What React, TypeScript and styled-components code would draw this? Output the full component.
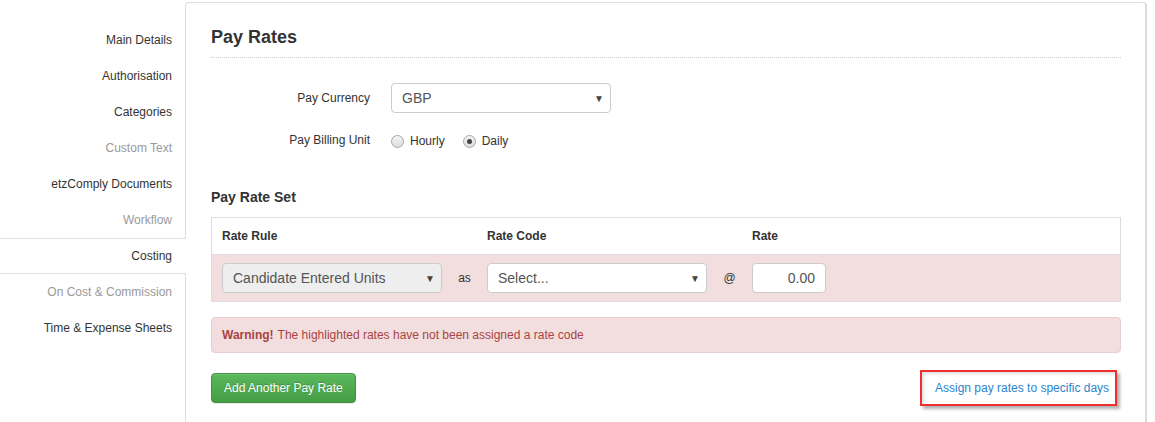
import React, { useState } from "react";
import styled, { createGlobalStyle } from "styled-components";

const GlobalStyle = createGlobalStyle`
  html, body {
    margin: 0;
    padding: 0;
    background: #ffffff;
  }
  body {
    font-family: "Liberation Sans", Arial, sans-serif;
    font-size: 12px;
    color: #333333;
  }
`;

const Page = styled.div`
  display: flex;
  align-items: flex-start;
  width: 1155px;
  height: 422px;
  overflow: hidden;
`;

const Sidebar = styled.nav`
  display: flex;
  flex-direction: column;
  width: 185px;
  flex-shrink: 0;
  padding-top: 22px;
  position: relative;
  z-index: 1;
`;

const NavItem = styled.div<{ $active?: boolean; $disabled?: boolean }>`
  height: 34px;
  display: flex;
  align-items: center;
  justify-content: flex-end;
  font-size: 12px;
  color: ${(p) => (p.$disabled ? "#999999" : "#333333")};
  border-top: 1px solid ${(p) => (p.$active ? "#dddddd" : "transparent")};
  border-bottom: 1px solid ${(p) => (p.$active ? "#dddddd" : "transparent")};
  background: ${(p) => (p.$active ? "#ffffff" : "transparent")};
  margin-right: ${(p) => (p.$active ? "-1px" : "0")};
  padding-right: ${(p) => (p.$active ? "14px" : "13px")};
  cursor: pointer;
`;

const Panel = styled.section`
  margin-top: 2px;
  width: 910px;
  height: 440px;
  border: 1px solid #dddddd;
  border-right: 2px solid #dddddd;
  border-radius: 4px 4px 0 0;
  padding: 0 24px 0 25px;
  display: flex;
  flex-direction: column;
`;

const Title = styled.h2`
  margin: 0;
  padding-top: 24px;
  padding-bottom: 10px;
  font-size: 18px;
  line-height: 20px;
  font-weight: bold;
  color: #333333;
  border-bottom: 1px dotted #cccccc;
`;

const Form = styled.div`
  display: flex;
  flex-direction: column;
  padding-top: 25px;
  gap: 17px;
`;

const FormRow = styled.div<{ $height: number }>`
  display: grid;
  grid-template-columns: 159px 220px;
  column-gap: 21px;
  align-items: center;
  height: ${(p) => p.$height}px;
`;

const Label = styled.label`
  text-align: right;
  font-size: 12px;
  color: #333333;
`;

const SelectBox = styled.div<{ $width: number; $grey?: boolean }>`
  box-sizing: border-box;
  width: ${(p) => p.$width}px;
  height: 30px;
  border: 1px solid #cccccc;
  border-radius: 4px;
  background: ${(p) => (p.$grey ? "#eeeeee" : "#ffffff")};
  color: #555555;
  font-size: 14px;
  display: flex;
  align-items: center;
  justify-content: space-between;
  padding: 0 6px 0 10px;
`;

const Caret = styled.span`
  font-size: 10px;
  color: #444444;
  margin-top: 1px;
`;

const RadioGroup = styled.div`
  display: flex;
  align-items: center;
  gap: 18px;
  padding-top: 2px;
`;

const RadioLabel = styled.label`
  display: flex;
  align-items: center;
  gap: 6px;
  font-size: 12px;
  color: #333333;
  cursor: pointer;
`;

const RadioDot = styled.span<{ $checked?: boolean }>`
  box-sizing: border-box;
  width: 13px;
  height: 13px;
  border-radius: 50%;
  border: 1px solid #a6a6a6;
  background: linear-gradient(#f4f4f4, #dcdcdc);
  display: inline-flex;
  align-items: center;
  justify-content: center;

  &::after {
    content: "";
    width: 5px;
    height: 5px;
    border-radius: 50%;
    background: ${(p) => (p.$checked ? "#444444" : "transparent")};
  }
`;

const SectionTitle = styled.h3`
  margin: 39px 0 12px;
  font-size: 14px;
  line-height: 16px;
  font-weight: bold;
  color: #333333;
`;

const Table = styled.div`
  border: 1px solid #dddddd;
`;

const RateGrid = styled.div<{ $header?: boolean }>`
  display: grid;
  grid-template-columns: 220px 45px 220px 45px 74px 1fr;
  align-items: center;
  padding: 0 10px;
  height: ${(p) => (p.$header ? "36px" : "46px")};
  background: ${(p) => (p.$header ? "#ffffff" : "#f2dede")};
  border-top: ${(p) => (p.$header ? "none" : "1px solid #dddddd")};
`;

const HeadCell = styled.div`
  font-size: 12px;
  font-weight: bold;
  color: #333333;
`;

const Joiner = styled.div`
  font-size: 12px;
  color: #333333;
  text-align: center;
`;

const RateInput = styled.div`
  box-sizing: border-box;
  width: 74px;
  height: 30px;
  border: 1px solid #cccccc;
  border-radius: 4px;
  background: #ffffff;
  color: #555555;
  font-size: 14px;
  display: flex;
  align-items: center;
  justify-content: flex-end;
  padding-right: 10px;
`;

const Alert = styled.div`
  margin-top: 15px;
  height: 36px;
  box-sizing: border-box;
  border: 1px solid #ebccd1;
  border-radius: 4px;
  background: #f2dede;
  color: #a94442;
  font-size: 12px;
  display: flex;
  align-items: center;
  padding: 0 10px;

  strong {
    margin-right: 4px;
  }
`;

const Footer = styled.div`
  display: flex;
  justify-content: space-between;
  align-items: center;
  margin-top: 17px;
  padding-right: 4px;
`;

const SuccessButton = styled.button`
  height: 30px;
  padding: 0 12px;
  border: 1px solid #3e8f3e;
  border-radius: 4px;
  background: linear-gradient(#5cb85c, #449d44);
  color: #ffffff;
  font-family: "Liberation Sans", Arial, sans-serif;
  font-size: 12px;
  text-shadow: 0 -1px 0 rgba(0, 0, 0, 0.2);
  box-shadow: inset 0 1px 0 rgba(255, 255, 255, 0.15), 0 1px 1px rgba(0, 0, 0, 0.075);
  cursor: pointer;
`;

const Highlight = styled.div`
  box-sizing: border-box;
  height: 36px;
  width: 197px;
  border: 2px solid #ef2f2f;
  box-shadow: 3px 3px 3px rgba(0, 0, 0, 0.3), inset 2px 2px 3px rgba(0, 0, 0, 0.12);
  display: flex;
  align-items: center;
  padding-left: 13px;
`;

const Link = styled.a`
  color: #2a86cf;
  font-size: 12px;
  text-decoration: none;
  cursor: pointer;
`;

const navItems = [
  { label: "Main Details" },
  { label: "Authorisation" },
  { label: "Categories" },
  { label: "Custom Text", disabled: true },
  { label: "etzComply Documents" },
  { label: "Workflow", disabled: true },
  { label: "Costing", active: true },
  { label: "On Cost & Commission", disabled: true },
  { label: "Time & Expense Sheets" },
];

const App: React.FC = () => {
  const [unit, setUnit] = useState<"hourly" | "daily">("daily");

  return (
    <>
      <GlobalStyle />
      <Page>
        <Sidebar>
          {navItems.map((item) => (
            <NavItem
              key={item.label}
              $active={item.active}
              $disabled={item.disabled}
            >
              {item.label}
            </NavItem>
          ))}
        </Sidebar>

        <Panel>
          <Title>Pay Rates</Title>

          <Form>
            <FormRow $height={30}>
              <Label>Pay Currency</Label>
              <SelectBox $width={220}>
                GBP
                <Caret>▼</Caret>
              </SelectBox>
            </FormRow>
            <FormRow $height={20}>
              <Label>Pay Billing Unit</Label>
              <RadioGroup>
                <RadioLabel onClick={() => setUnit("hourly")}>
                  <RadioDot $checked={unit === "hourly"} />
                  Hourly
                </RadioLabel>
                <RadioLabel onClick={() => setUnit("daily")}>
                  <RadioDot $checked={unit === "daily"} />
                  Daily
                </RadioLabel>
              </RadioGroup>
            </FormRow>
          </Form>

          <SectionTitle>Pay Rate Set</SectionTitle>

          <Table>
            <RateGrid $header>
              <HeadCell>Rate Rule</HeadCell>
              <div />
              <HeadCell>Rate Code</HeadCell>
              <div />
              <HeadCell>Rate</HeadCell>
              <div />
            </RateGrid>
            <RateGrid>
              <SelectBox $width={220} $grey>
                Candidate Entered Units
                <Caret>▼</Caret>
              </SelectBox>
              <Joiner>as</Joiner>
              <SelectBox $width={220}>
                Select...
                <Caret>▼</Caret>
              </SelectBox>
              <Joiner>@</Joiner>
              <RateInput>0.00</RateInput>
              <div />
            </RateGrid>
          </Table>

          <Alert>
            <strong>Warning!</strong> The highlighted rates have not been
            assigned a rate code
          </Alert>

          <Footer>
            <SuccessButton>Add Another Pay Rate</SuccessButton>
            <Highlight>
              <Link>Assign pay rates to specific days</Link>
            </Highlight>
          </Footer>
        </Panel>
      </Page>
    </>
  );
};

export default App;
